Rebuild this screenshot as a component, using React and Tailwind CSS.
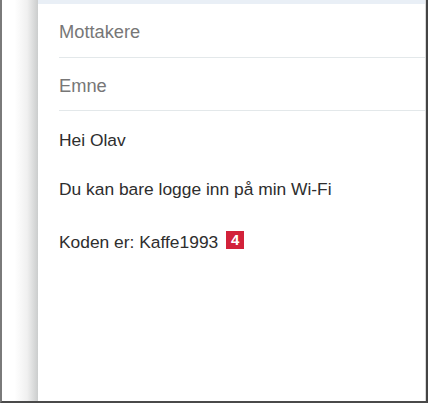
export default function App() {
  return (
    <div
      className="w-[428px] h-[403px] flex border-l-2 border-r-2 border-b-2 border-l-[#7a7a7a] border-r-[#444] border-b-[#4a4a4a] bg-white overflow-hidden"
      style={{ fontFamily: '"Liberation Sans", Arial, sans-serif' }}
    >
      {/* gutter with panel shadow */}
      <div className="w-[36px] shrink-0 bg-gradient-to-r from-white from-[35%] via-[#f0f0f0] via-[70%] to-[#cbcdcd]" />

      {/* mail panel */}
      <div className="flex-1 flex flex-col bg-white border-r border-[#d8d8d8]">
        <div className="h-[4px] bg-[#e9eff6]" />

        <div className="pl-[21px]">
          {/* Mottakere */}
          <div className="pt-[17px] pb-[15px] border-b border-[#e3e8ea]">
            <div className="text-[18.3px] leading-[21px] text-[#777]">Mottakere</div>
          </div>

          {/* Emne */}
          <div className="pt-[17px] pb-[14px] border-b border-[#e3e8ea]">
            <div className="text-[18.3px] leading-[21px] text-[#777]">Emne</div>
          </div>

          {/* Body */}
          <div className="text-[17.4px] leading-[20px] text-[#2e2e2e]">
            <p className="mt-[19px]">Hei Olav</p>
            <p className="mt-[29px]">Du kan bare logge inn på min Wi-Fi</p>
            <div className="mt-[33px] flex items-start">
              <span>Koden er: Kaffe1993</span>
              <span className="ml-[8px] mt-[-1px] w-[18px] h-[18px] bg-[#d2213a] text-white font-bold text-[15px] leading-[18px] flex items-center justify-center">
                4
              </span>
            </div>
          </div>
        </div>
      </div>
    </div>
  );
}
